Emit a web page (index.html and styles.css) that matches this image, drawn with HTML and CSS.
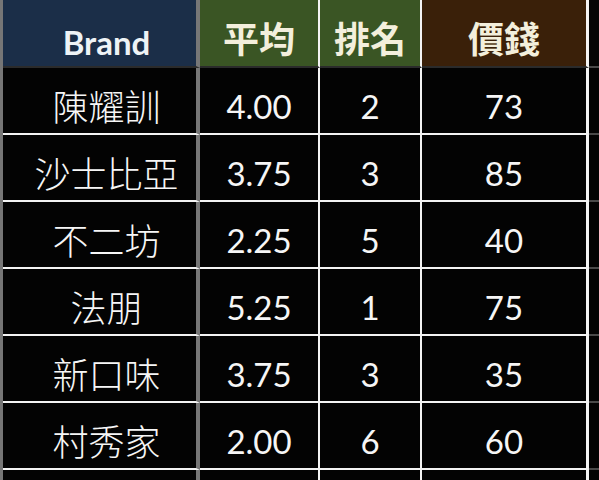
FILE: index.html
```html
<!DOCTYPE html>
<html lang="zh-Hant">
<head>
<meta charset="utf-8">
<title>Brand</title>
<link rel="stylesheet" href="styles.css">
</head>
<body>
<div class="sheet">
  <div class="row head">
    <div class="cell brand">Brand</div>
    <div class="cell avg">平均</div>
    <div class="cell rank">排名</div>
    <div class="cell price">價錢</div>
    <div class="cell extra"></div>
  </div>
  <div class="row">
    <div class="cell brand">陳耀訓</div>
    <div class="cell num">4.00</div>
    <div class="cell num">2</div>
    <div class="cell num">73</div>
    <div class="cell extra"></div>
  </div>
  <div class="row">
    <div class="cell brand">沙士比亞</div>
    <div class="cell num">3.75</div>
    <div class="cell num">3</div>
    <div class="cell num">85</div>
    <div class="cell extra"></div>
  </div>
  <div class="row">
    <div class="cell brand">不二坊</div>
    <div class="cell num">2.25</div>
    <div class="cell num">5</div>
    <div class="cell num">40</div>
    <div class="cell extra"></div>
  </div>
  <div class="row">
    <div class="cell brand">法朋</div>
    <div class="cell num">5.25</div>
    <div class="cell num">1</div>
    <div class="cell num">75</div>
    <div class="cell extra"></div>
  </div>
  <div class="row">
    <div class="cell brand">新口味</div>
    <div class="cell num">3.75</div>
    <div class="cell num">3</div>
    <div class="cell num">35</div>
    <div class="cell extra"></div>
  </div>
  <div class="row">
    <div class="cell brand">村秀家</div>
    <div class="cell num">2.00</div>
    <div class="cell num">6</div>
    <div class="cell num">60</div>
    <div class="cell extra"></div>
  </div>
  <div class="row">
    <div class="cell brand"></div>
    <div class="cell num"></div>
    <div class="cell num"></div>
    <div class="cell num"></div>
    <div class="cell extra"></div>
  </div>
</div>
</body>
</html>
```
FILE: styles.css
```css
* { box-sizing: border-box; }
html, body {
  margin: 0;
  padding: 0;
  background: #030303;
  overflow: hidden;
}
.sheet {
  width: 599px;
  height: 480px;
  overflow: hidden;
  border-left: 3px solid #767676;
}
.row {
  display: grid;
  grid-template-columns: 197px 120px 102px 167px 1fr;
  height: 67px;
}
.cell {
  display: flex;
  align-items: center;
  justify-content: center;
  border-bottom: 2px solid #f4f4f4;
  border-right: 2px solid #f4f4f4;
  color: #f6f6f6;
  font-family: "Noto Sans CJK TC", sans-serif;
  font-size: 36px;
  font-weight: 300;
  line-height: 1;
  padding-top: 8px;
  background: #030303;
}
.cell.brand {
  border-right: 4px solid #777777;
  padding-left: 14px;
}
.cell:nth-child(4) {
  border-right-width: 3px;
}
.cell.extra {
  border-right: none;
  border-bottom: 2px solid #4a4a4a;
}
.cell.num {
  font-family: Lato, "Open Sans", sans-serif;
  font-size: 33px;
  font-weight: 400;
  padding-top: 12px;
}
.head {
  height: 68px;
}
.head .cell {
  border-bottom: 2px solid #2b2b2b;
  font-weight: 700;
  font-size: 36px;
  color: #f3efdc;
  padding-top: 8px;
}
.head .cell.brand {
  background: #1b2e48;
  color: #eef3f6;
  font-family: Lato, "Open Sans", sans-serif;
  font-size: 33px;
  padding-top: 18px;
}
.head .cell.avg,
.head .cell.rank {
  background: #3a5524;
}
.head .cell.price {
  background: #3a2009;
}
.head .cell.extra {
  background: #050505;
  border-bottom-color: #4a4a4a;
}
```
